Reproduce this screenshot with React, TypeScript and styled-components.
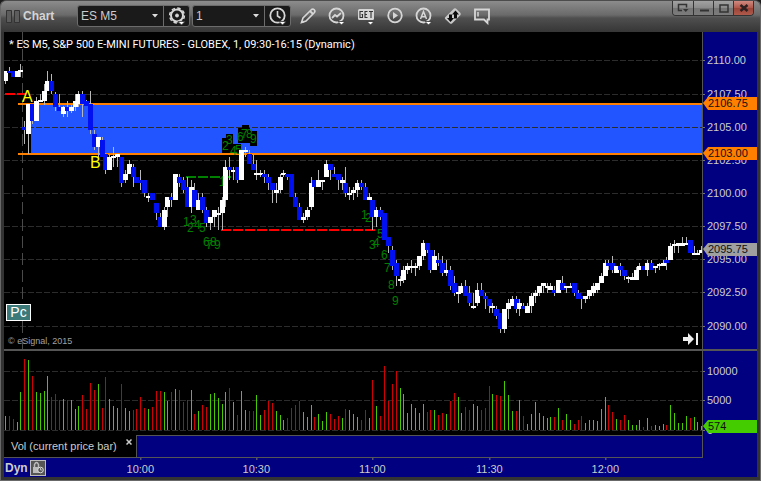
import React from "react";
import styled, { createGlobalStyle } from "styled-components";

const GlobalStyle = createGlobalStyle`
  *, *::before, *::after { box-sizing: border-box; }
  body { margin: 0; background: #1c1c1c; font-family: "Liberation Sans", Arial, sans-serif; }
  button, select { font-family: inherit; }
`;

/* ---------- data ---------- */

type Candle = [kind: 0 | 1, high: number, top: number, bottom: number, low: number];

const candles: Candle[] = [
  [1,71,71,81,84],[0,67,71,73,73],[0,71,71,77,77],[1,71,71,77,77],[1,64,70,72,77],
  [0,121,127,130,144],[1,104,104,134,154],[0,104,104,121,124],[1,97,101,121,121],[1,94,100,102,102],
  [1,84,91,101,105],[1,71,81,91,91],[0,74,81,91,94],[0,92,94,107,111],[0,94,107,111,111],
  [1,106,107,114,117],[0,101,107,111,117],[1,105,107,111,113],[1,94,101,107,111],[1,91,94,104,107],
  [0,91,94,104,117],[0,100,101,106,106],[0,91,104,130,134],[0,130,134,147,150],[1,137,137,147,157],
  [0,137,140,157,157],[0,154,154,170,174],[1,154,157,170,170],[1,147,156,158,167],[1,154,154,157,167],
  [0,157,157,183,187],[1,170,174,180,183],[1,160,164,174,174],[0,164,167,177,187],[0,177,177,183,183],
  [0,170,180,183,190],[0,180,180,193,197],[1,193,196,198,202],[0,193,193,200,200],[0,203,203,213,220],
  [0,213,217,227,227],[1,207,210,227,230],[1,197,197,207,217],[0,193,197,200,207],[1,174,174,200,200],
  [0,174,177,183,187],[0,177,180,190,193],[0,177,187,207,207],[1,180,187,207,213],[0,183,190,207,207],
  [1,193,200,210,210],[0,193,197,210,213],[0,207,210,223,227],[1,217,217,223,230],[1,210,210,217,227],
  [1,207,213,215,230],[1,197,200,213,230],[1,160,167,200,207],[0,157,167,170,180],[1,167,170,172,180],
  [0,167,167,180,183],[1,150,150,180,180],[1,147,150,152,157],[0,150,154,164,164],[0,154,164,170,170],
  [1,160,173,175,180],[1,170,173,175,177],[0,170,174,177,183],[0,174,177,183,190],[0,183,183,190,203],
  [1,183,190,193,203],[1,174,177,190,193],[1,170,173,175,177],[0,174,174,177,180],[0,174,174,197,197],
  [0,193,197,207,207],[0,203,207,220,220],[1,213,217,220,223],[1,207,210,217,220],[1,177,183,207,210],
  [0,180,180,187,187],[1,170,180,187,187],[1,180,180,182,190],[1,160,164,177,177],[0,164,164,170,180],
  [0,167,174,177,177],[0,174,174,180,190],[1,177,180,183,190],[0,167,183,193,197],[1,187,193,195,200],
  [1,187,190,193,200],[1,180,183,190,197],[0,180,183,187,190],[0,183,187,200,200],[1,193,197,200,200],
  [0,200,200,217,230],[1,207,210,217,227],[0,207,210,217,220],[0,213,213,240,240],[0,237,237,246,253],
  [0,246,250,266,270],[0,260,263,276,286],[1,276,279,281,286],[1,266,270,280,283],[1,263,266,270,274],
  [1,260,266,268,273],[1,263,266,268,276],[1,256,256,266,270],[1,240,243,256,260],[0,243,243,250,253],
  [0,250,250,270,273],[1,250,256,270,270],[0,253,260,263,266],[0,256,263,273,276],[1,260,270,273,276],
  [0,266,270,286,290],[0,276,283,293,296],[1,286,292,294,303],[1,283,286,293,293],[0,280,286,296,296],
  [0,286,293,303,306],[1,293,306,308,309],[1,283,290,303,306],[0,283,290,296,296],[0,293,296,299,309],
  [0,299,299,306,313],[1,303,306,308,313],[0,306,309,316,319],[0,313,313,329,333],[1,309,309,329,333],
  [1,299,303,309,319],[1,296,299,306,306],[0,296,299,309,313],[1,299,303,309,316],[0,303,306,309,309],
  [1,303,306,313,313],[1,293,296,306,313],[1,290,293,296,303],[1,286,286,293,296],[1,283,283,286,293],
  [1,283,286,288,293],[1,283,286,290,290],[0,286,290,293,296],[1,280,280,293,293],[0,276,283,290,290],
  [1,286,286,288,293],[1,283,286,288,288],[0,283,283,293,296],[0,290,293,299,299],[0,296,296,299,309],
  [1,296,296,299,303],[1,290,290,296,299],[1,283,286,293,296],[1,283,283,290,293],[1,273,276,283,283],
  [1,260,263,276,276],[0,260,263,266,270],[0,256,263,270,273],[1,266,266,273,273],[0,263,266,270,276],
  [0,270,270,276,280],[1,276,277,279,283],[1,273,277,280,280],[1,267,270,280,280],[1,263,266,270,270],
  [0,266,266,270,270],[1,260,263,270,276],[0,260,263,270,270],[1,266,266,268,273],[1,263,264,266,270],
  [1,260,263,266,266],[0,257,260,263,270],[1,243,246,260,260],[1,240,244,246,253],[1,243,243,246,253],
  [1,237,243,246,246],[1,237,243,245,245],[0,240,240,253,253],[1,246,253,255,255],[1,250,253,255,255],
  [1,246,250,253,253],
];

/* Bar heights; a negative value is a down bar. */
const volumes: number[] = [
  14,-14,-11,8,38,-71,70,-54,38,37,39,54,-33,-36,-30,31,-30,30,21,24,
  -35,-21,-47,-40,46,-22,-53,31,24,22,-46,22,19,-20,-21,-33,-22,21,-23,-39,
  -39,38,29,-38,41,-40,-28,-30,40,-16,19,-25,-23,36,37,32,26,38,-42,28,
  -15,39,20,-19,-19,35,15,-20,-29,-27,19,15,10,-12,-22,-25,-29,18,13,25,
  -13,16,9,18,-16,-11,-14,12,-21,20,16,13,-10,-20,12,-50,24,-14,-64,-29,
  -46,-59,42,36,17,26,22,17,26,-18,-20,20,-15,-17,16,-29,-37,33,17,-23,
  -20,26,24,-20,-22,-44,36,-35,-34,49,35,19,-19,30,-14,6,16,28,17,14,
  12,13,-13,22,-10,16,10,-6,-10,-14,7,10,10,9,21,33,-25,-18,11,-10,
  -15,10,5,5,10,-3,12,-4,5,4,6,-5,25,17,7,7,14,-12,13,8,4,
];

const priceTicks: [string, number][] = [
  ["2110.00", 60], ["2107.50", 94], ["2105.00", 127], ["2102.50", 160], ["2100.00", 193],
  ["2097.50", 226], ["2095.00", 259], ["2092.50", 292], ["2090.00", 326],
];
const volumeTicks: [string, number][] = [["10000", 371], ["5000", 400], ["0", 430]];
const timeTicks: [string, number][] = [
  ["10:00", 140], ["10:30", 256], ["11:00", 372], ["11:30", 489], ["12:00", 605],
];

const counts: [string, number, number][] = [
  ["1",219,186],["2",222,150],["3",226,144],["4",230,155],["5",235,154],
  ["6",237,141],["7",241,138],["8",246,138],["9",250,143],
  ["1",183,226],["2",187,232],["3",190,224],["4",194,229],["5",199,232],
  ["6",203,246],["7",206,249],["8",210,246],["9",214,249],
  ["1",361,219],["2",365,222],["3",369,249],["4",373,247],["5",377,238],
  ["6",381,259],["7",384,272],["8",388,289],["9",392,305],
];
const countBoxes = [
  [222,138,8,15],[226,134,7,10],[230,144,11,9],[238,128,12,15],[242,125,7,5],[250,131,7,15],
];

const barX = (i: number) => Math.floor(5.4 + 3.869 * i);

/* ---------- window frame ---------- */

const Window = styled.main`
  display: flex;
  flex-direction: column;
  overflow: hidden;
  background: #333;
  border: 1px solid #686868;
  border-top-color: #4c4c4c;
  border-radius: 6px 6px 0 0;
`;

const TitleBar = styled.header`
  display: flex;
  align-items: flex-start;
  height: 31px;
  padding: 0 6px 0 5px;
  background: linear-gradient(#8c8c8c 0, #6a6a6a 14px, #4f4f4f 17px, #363636 31px);
`;

const TitleTools = styled.div`
  display: flex;
  flex: 1;
  align-items: center;
  height: 30px;
`;

const Grip = styled.svg`
  margin-right: 3px;
`;

const Title = styled.h1`
  width: 54px;
  margin: 0;
  color: #d4d4d4;
  font-size: 12px;
  line-height: 16px;
`;

const FieldGroup = styled.div`
  display: flex;
  height: 22px;
  margin-right: 2px;
  background: #1a1a1a;
  border: 1px solid #6c6c6c;
  border-radius: 3px;
`;

const Field = styled.label<{ $width: number }>`
  display: grid;
  align-items: center;
  width: ${(p) => p.$width}px;
  > * { grid-area: 1 / 1; }
  > svg { justify-self: end; margin-right: 5px; pointer-events: none; }
`;

const Select = styled.select`
  width: 100%;
  height: 20px;
  padding: 0 3px;
  color: #ccc;
  font-size: 12px;
  background: transparent;
  border: 0;
  appearance: none;
`;

const ToolButton = styled.button<{ $boxed?: boolean }>`
  display: grid;
  place-items: center;
  width: ${(p) => (p.$boxed ? 26 : 29)}px;
  height: 20px;
  padding: 0;
  background: none;
  border: 0;
  border-left: ${(p) => (p.$boxed ? "1px solid #6c6c6c" : "0")};
`;

const WindowButtons = styled.div`
  display: flex;
  height: 15px;
  border: 1px solid #333;
  border-top: 0;
  border-radius: 0 0 4px 4px;
  overflow: hidden;
`;

const WindowButton = styled.button<{ $close?: boolean }>`
  display: grid;
  place-items: center;
  width: 20px;
  padding: 0;
  border: 0;
  border-left: 1px solid #333;
  background: ${(p) =>
    p.$close
      ? "linear-gradient(#d08a80, #b0564a 50%, #9a4438 51%, #b05a4c)"
      : "linear-gradient(#a2a2a2, #8a8a8a 50%, #757575 51%, #7c7c7c)"};
  &:first-child { border-left: 0; }
`;

/* ---------- chart panes ---------- */

const ChartBody = styled.section`
  display: grid;
  grid-template-columns: minmax(0, 1fr) 54px;
  margin: 0 3px 3px;
  background: navy;
`;

const Pane = styled.div<{ $height: number; $divided?: boolean }>`
  position: relative;
  height: ${(p) => p.$height}px;
  overflow: hidden;
  background: #000;
  border-right: 1px solid #555;
  border-bottom: ${(p) => (p.$divided ? "2px solid #555" : "0")};
`;

const AxisPane = styled.div<{ $height: number; $divided?: boolean }>`
  height: ${(p) => p.$height}px;
  border-bottom: ${(p) => (p.$divided ? "2px solid #555" : "0")};
`;

const Drawing = styled.svg`
  display: block;
  width: 100%;
  height: 100%;
  overflow: hidden;
`;

const AxisText = styled.text<{ $dark?: boolean }>`
  fill: ${(p) => (p.$dark ? "#111" : "#ccc")};
  font-size: 11px;
`;

const MarkText = styled.text<{ $big?: boolean }>`
  fill: ${(p) => (p.$big ? "#ff0" : "#008000")};
  font-size: ${(p) => (p.$big ? 16 : 12)}px;
`;

const SymbolLine = styled.p`
  position: absolute;
  top: 6px;
  left: 5px;
  margin: 0;
  color: #fff;
  font-family: Roboto, "Liberation Sans", sans-serif;
  font-size: 11px;
  line-height: 13px;
  white-space: nowrap;
`;

const PcBadge = styled.button`
  position: absolute;
  left: 2px;
  bottom: 28px;
  width: 25px;
  height: 17px;
  padding: 0;
  color: #fff;
  font-size: 14px;
  line-height: 15px;
  background: #3c7a7a;
  border: 1px solid #fff;
`;

const Copyright = styled.small`
  position: absolute;
  left: 4px;
  bottom: 2px;
  color: #a0a0a0;
  font-size: 9px;
  line-height: 12px;
`;

const JumpButton = styled.button`
  position: absolute;
  right: 3px;
  bottom: 3px;
  display: grid;
  padding: 0;
  background: none;
  border: 0;
`;

const TabStrip = styled.div`
  display: flex;
  height: 23px;
  border-right: 1px solid #555;
  border-bottom: 1px solid #555;
`;

const Tab = styled.div`
  display: flex;
  align-items: flex-start;
  justify-content: space-between;
  width: 133px;
  padding: 4px 4px 0 7px;
  color: #ccc;
  font-size: 11px;
  line-height: 14px;
  white-space: nowrap;
  background: #000;
  border-right: 1px solid #555;
`;

const TabClose = styled.button`
  display: grid;
  padding: 0;
  background: none;
  border: 0;
`;

const TabFill = styled.div`
  flex: 1;
  border-top: 1px solid #555;
`;

const TimeRow = styled.div`
  display: flex;
  height: 19px;
  padding-right: 1px;
`;

const Mode = styled.div`
  display: flex;
  align-items: center;
  gap: 2px;
  padding-left: 1px;
  color: #ccc;
  font-size: 12px;
  font-weight: bold;
`;

const LockButton = styled.button`
  display: grid;
  place-items: center;
  width: 16px;
  height: 16px;
  padding: 0;
  background: #555;
  border: 1px solid #bbb;
`;

const TimeAxis = styled.div`
  flex: 1;
  min-width: 0;
`;

/* Places chart units so that the newest bar stays at the right edge. */
function Anchored({ top, children }: { top: number; children: React.ReactNode }) {
  return (
    <svg x="100%" overflow="visible">
      <g transform={`translate(-702 ${-top})`}>{children}</g>
    </svg>
  );
}

function Grid({ ticks, top }: { ticks: [string, number][]; top: number }) {
  return (
    <>
      {ticks.map(([label, y]) => (
        <line key={label} x1="0" x2="100%" y1={y - top + 0.5} y2={y - top + 0.5} stroke="#2c2c2c" strokeDasharray="6 2" />
      ))}
    </>
  );
}

function Flag({ y, color, label }: { y: number; color: string; label: string }) {
  return (
    <g>
      <path d={`M0 ${y + 6}L5 ${y}H60V${y + 13}H5Z`} fill={color} />
      <AxisText $dark x="5" y={y + 10}>{label}</AxisText>
    </g>
  );
}

function PricePlot() {
  return (
    <Drawing role="img" aria-label="Price chart" shapeRendering="crispEdges">
      <Anchored top={32}>
        <rect x="31" y="105" width="680" height="48" fill="#2255ff" />
      </Anchored>
      <Grid ticks={priceTicks} top={32} />
      <Anchored top={32}>
        <line x1="22.5" x2="22.5" y1="32" y2="349" stroke="#4a4a4a" strokeDasharray="12 5" />
        <g fill="#000">
          {countBoxes.map(([x, y, w, h]) => <rect key={`${x}-${y}`} x={x} y={y} width={w} height={h} />)}
        </g>
        <g fill="none" strokeWidth="2">
          <path d="M5 94H26" stroke="#f00" strokeDasharray="10 2" />
          <path d="M186 177H231" stroke="#008000" strokeDasharray="10 2" />
          <path d="M221 230H375" stroke="#f00" strokeDasharray="10 2" />
          <path d="M18 104H702M18 154H702" stroke="#ff8000" />
        </g>
        {counts.map(([n, x, y], i) => <MarkText key={i} x={x} y={y}>{n}</MarkText>)}
        {candles.map(([up, high, top, bottom, low], i) => (
          <g key={i}>
            <rect x={barX(i)} y={high} width="1" height={low - high} fill="#b8b8b8" />
            <rect x={barX(i) - 2} y={top} width="5" height={bottom - top} fill={up ? "#fff" : "#0010f0"} />
          </g>
        ))}
        <MarkText $big x="22" y="102">A</MarkText>
        <MarkText $big x="90" y="168">B</MarkText>
      </Anchored>
    </Drawing>
  );
}

function VolumePlot() {
  return (
    <Drawing role="img" aria-label="Volume chart" shapeRendering="crispEdges">
      <Grid ticks={volumeTicks} top={351} />
      <Anchored top={351}>
        {volumes.map((v, i) => (
          <rect key={i} x={barX(i)} y={430 - Math.abs(v)} width="1" height={Math.abs(v)} fill={v < 0 ? "#d00000" : "#44cc00"} />
        ))}
      </Anchored>
    </Drawing>
  );
}

function AxisTicks({ ticks, top }: { ticks: [string, number][]; top: number }) {
  return (
    <>
      {ticks.map(([label, y]) => (
        <g key={label}>
          <rect y={y - top} width="2" height="1" fill="#777" />
          <AxisText x="4" y={y - top + 4}>{label}</AxisText>
        </g>
      ))}
    </>
  );
}

/* ---------- icons ---------- */

const Caret = () => (
  <svg width="6" height="4" viewBox="0 0 6 4" aria-hidden="true"><path d="M0 0H6L3 3.5Z" fill="#ddd" /></svg>
);

const DropMark = () => <path d="M10 14.5H17L13.5 18Z" fill="#fff" stroke="#333" strokeWidth=".8" />;

function Icon({ children }: { children: React.ReactNode }) {
  return (
    <svg width="18" height="18" viewBox="0 0 18 18" fill="none" stroke="#d6d6d6" strokeWidth="1.8" aria-hidden="true">
      {children}
    </svg>
  );
}

const tools: { name: string; icon: React.ReactNode }[] = [
  { name: "Draw", icon: <><path d="M2.5 15.5L4 11L12.5 2.5Q14 1.5 15.3 2.8T15.2 5.7L7 14Z" strokeWidth="1.6" /><path d="M11 4L14 7M2.5 15.5L5 14.5" /></> },
  { name: "Studies", icon: <><circle cx="8.5" cy="8.5" r="7" /><path d="M4 11L7 8L9 9.5L13 6" /><DropMark /></> },
  { name: "GET", icon: <><rect x="1" y="2" width="16" height="11" rx="1.5" fill="#d6d6d6" stroke="none" /><path d="M6 4.5H3V10.5H5.5V7.5H4.5M10.5 4.5H8V10.5H10.5M8 7.5H10M12 4.5H16M14 4.5V11" stroke="#333" strokeWidth="1.1" /><DropMark /></> },
  { name: "Replay", icon: <><circle cx="9" cy="8.5" r="6.8" /><path d="M7 5V12L12 8.5Z" fill="#d6d6d6" stroke="none" /></> },
  { name: "Alerts", icon: <><circle cx="8.5" cy="8.5" r="7" /><path d="M5.5 12L8.5 4.5L11.5 12M6.5 9.8H10.5" strokeWidth="1.5" /><DropMark /></> },
  { name: "Trade", icon: <><path d="M1 10.5L10 1.5Q11 .8 12 1.5L16.5 6Q17 7 16.5 8L8 16.5Q7 17 6 16.5L1.2 12Q.6 11 1 10.5Z" fill="#c8c8c8" stroke="none" /><path d="M5 7.5H8V11H10L6.5 15L3 11H5ZM10 11.500V7.5H8L11.5 3.500L15 7.500H13V11.500Z" fill="#0c0c0c" stroke="none" /></> },
  { name: "Comment", icon: <><path d="M2 2.5H16V12.5H14.5V16L11 12.5H2Z" /><path d="M5 5V9.5" strokeWidth="1.5" /></> },
];

export default function App() {
  return (
    <>
      <GlobalStyle />
      <Window>
        <TitleBar>
          <TitleTools>
            <Grip width="14" height="13" viewBox="0 0 14 13" fill="#5c5c5c" stroke="#333" aria-hidden="true">
              <path d="M.5 .5H5.5V12.5H.5ZM8.5 .5H13.5V12.5H8.5Z" />
            </Grip>
            <Title>Chart</Title>
            <FieldGroup>
              <Field $width={85}>
                <Select aria-label="Symbol"><option>ES M5</option></Select>
                <Caret />
              </Field>
              <ToolButton $boxed aria-label="Settings">
                <Icon>
                  <circle cx="9" cy="8.5" r="6" strokeWidth="2" />
                  <circle cx="9" cy="8.5" r="7.4" strokeWidth="1.5" strokeDasharray="3.5 2.312" />
                  <circle cx="9" cy="8.5" r="1.5" fill="#d6d6d6" strokeWidth="1" />
                  <DropMark />
                </Icon>
              </ToolButton>
            </FieldGroup>
            <FieldGroup>
              <Field $width={71}>
                <Select aria-label="Interval"><option>1</option></Select>
                <Caret />
              </Field>
              <ToolButton $boxed aria-label="Time template">
                <Icon><circle cx="8.5" cy="8.5" r="7.2" /><path d="M8.5 4V9L11.5 11" strokeWidth="1.6" /><DropMark /></Icon>
              </ToolButton>
            </FieldGroup>
            {tools.map((t) => (
              <ToolButton key={t.name} aria-label={t.name}><Icon>{t.icon}</Icon></ToolButton>
            ))}
          </TitleTools>
          <WindowButtons>
            <WindowButton aria-label="Window menu">
              <svg width="12" height="10" viewBox="0 0 12 10" fill="none" stroke="#333" strokeWidth="1.5"><path d="M5 7.5H1.5V1.5H9.5V4.5" /><path d="M6 6H11.5L8.75 9Z" fill="#333" stroke="none" /></svg>
            </WindowButton>
            <WindowButton aria-label="Minimize">
              <svg width="10" height="10"><path d="M1 6.5H10V8.5H1Z" fill="#333" /></svg>
            </WindowButton>
            <WindowButton aria-label="Maximize">
              <svg width="10" height="10" fill="none" stroke="#333"><path d="M1 2H9V9H1Z" strokeWidth="1.5" /></svg>
            </WindowButton>
            <WindowButton $close aria-label="Close">
              <svg width="10" height="10" stroke="#2c2020" strokeWidth="2.5"><path d="M1.5 2L8.5 8M8.5 2L1.5 8" /></svg>
            </WindowButton>
          </WindowButtons>
        </TitleBar>

        <ChartBody>
          <Pane $height={319} $divided>
            <PricePlot />
            <SymbolLine>* ES M5, S&amp;P 500 E-MINI FUTURES - GLOBEX, 1, 09:30-16:15 (Dynamic)</SymbolLine>
            <PcBadge>Pc</PcBadge>
            <Copyright>© eSignal, 2015</Copyright>
            <JumpButton aria-label="Jump to latest bar">
              <svg width="16" height="14" viewBox="0 0 16 14"><path d="M0 5H5V1L11 7L5 13V9H0ZM13 1H15V13H13Z" fill="#eee" /></svg>
            </JumpButton>
          </Pane>
          <AxisPane $height={319} $divided>
            <Drawing role="img" aria-label="Price scale">
              <AxisTicks ticks={priceTicks} top={32} />
              <Flag y={65} color="#ff8000" label="2106.75" />
              <Flag y={115} color="#ff8000" label="2103.00" />
              <Flag y={211} color="#a0a0a0" label="2095.75" />
            </Drawing>
          </AxisPane>

          <Pane $height={84}><VolumePlot /></Pane>
          <AxisPane $height={84}>
            <Drawing role="img" aria-label="Volume scale">
              <AxisTicks ticks={volumeTicks} top={351} />
              <Flag y={69} color="#44cc00" label="574" />
            </Drawing>
          </AxisPane>

          <TabStrip>
            <Tab>
              Vol (current price bar)
              <TabClose aria-label="Close study">
                <svg width="6" height="6" stroke="#ccc" strokeWidth="1.5"><path d="M.5 .5L5.5 5.5M5.5 .5L.5 5.5" /></svg>
              </TabClose>
            </Tab>
            <TabFill />
          </TabStrip>
          <div />

          <TimeRow>
            <Mode>
              Dyn
              <LockButton aria-label="Lock time scale">
                <svg width="12" height="13" viewBox="0 0 12 13" fill="none" stroke="#bbb"><path d="M2.5 6V3.5Q4.5 -.5 6.5 3.5V6" strokeWidth="1.5" /><path d="M1 6H7V12H1Z" fill="#bbb" stroke="none" /><circle cx="8.5" cy="9" r="2.8" fill="#555" stroke="#ddd" /><path d="M8.5 7V9H10" /></svg>
              </LockButton>
            </Mode>
            <TimeAxis>
              <Drawing role="img" aria-label="Time scale">
                <Anchored top={458}>
                  {timeTicks.map(([label, x]) => (
                    <g key={label}>
                      <rect x={x} y="458" width="1" height="2" fill="#777" />
                      <AxisText x={x} y="473" textAnchor="middle">{label}</AxisText>
                    </g>
                  ))}
                </Anchored>
              </Drawing>
            </TimeAxis>
          </TimeRow>
          <div />
        </ChartBody>
      </Window>
    </>
  );
}
